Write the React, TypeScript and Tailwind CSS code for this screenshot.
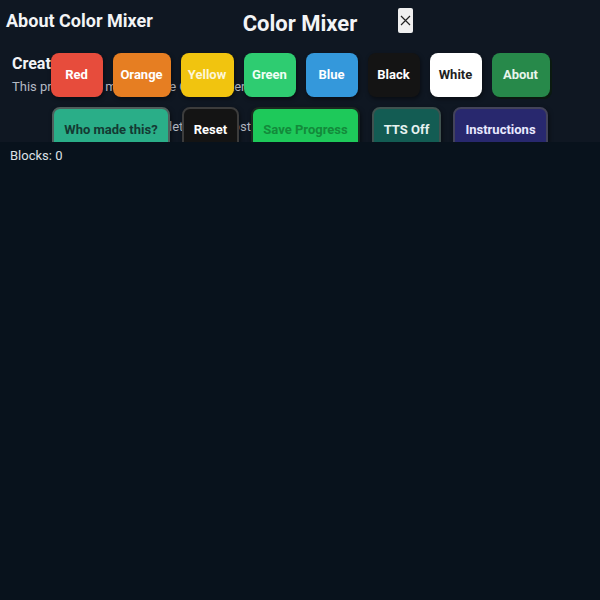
const colorButtons = [
  { label: "Red", cls: "w-[52px] bg-[#e74c3c] text-white" },
  { label: "Orange", cls: "w-[58px] bg-[#e67e22] text-white" },
  { label: "Yellow", cls: "w-[53px] bg-[#f1c40f] text-[#fdf6d8]" },
  { label: "Green", cls: "w-[52px] bg-[#2ecc71] text-[#f0fff5]" },
  { label: "Blue", cls: "w-[52px] bg-[#3498db] text-white" },
  { label: "Black", cls: "w-[52px] bg-[#141414] text-white" },
  { label: "White", cls: "w-[52px] bg-white text-[#1f1f1f]" },
  { label: "About", cls: "w-[58px] bg-[#27894a] text-[#e8f5ec] shadow-[2px_2px_0_#0b1a10]" },
];

const toolButtons = [
  { label: "Who made this?", cls: "w-[118px] bg-[#2aae88] text-[#143a33] border-[#4f5f5c]" },
  { label: "Reset", cls: "w-[57px] bg-[#141414] text-white border-[#3c3c3c]" },
  { label: "Save Progress", cls: "w-[109px] bg-[#1ec95a] text-[#138a3a] border-[#1a2a20]" },
  { label: "TTS Off", cls: "w-[69px] bg-[#135c53] text-[#e6f2f0] border-[#3f524f]" },
  { label: "Instructions", cls: "w-[95px] bg-[#28286e] text-[#e8e8ff] border-[#43435a]" },
];

export default function App() {
  return (
    <div className="min-h-screen bg-[#08121c] font-['Roboto','Liberation_Sans',sans-serif]">
      <header className="relative h-[142px] overflow-hidden bg-[#0f1722]">
        {/* about modal, sits under the toolbar */}
        <div className="absolute inset-0 px-[6px] pt-[9px]">
          <h2 className="text-[18px] leading-[24px] font-bold text-[#f3f4f6]">About Color Mixer</h2>
          <button className="absolute left-[398px] top-[8px] flex h-[25px] w-[15px] items-center justify-center rounded-[2px] bg-[#efefef]">
            <svg width="11" height="11" viewBox="0 0 11 11" stroke="#222" strokeWidth="1.2" fill="none">
              <path d="M1 1L10 10M10 1L1 10" />
            </svg>
          </button>
          <div className="px-[6px]">
            <h3 className="mt-[20px] text-[16px] leading-[22px] font-bold text-[#f3f4f6]">Created By</h3>
            <p className="mt-[3px] text-[13px] leading-[18px] text-[#b4b9c2]">
              This program is made by the Color Mixer Editor.
            </p>
            <p className="mt-[22px] w-[239px] text-right text-[13px] leading-[18px] text-[#b4b9c2]">
              Enjoy the details at most
            </p>
          </div>
        </div>

        <div className="relative flex flex-col items-center pt-[9px]">
          <h1 className="text-[22px] leading-[30px] font-bold text-[#f3f4f6]">Color Mixer</h1>

          <div className="mt-[14px] flex gap-[10px]">
            {colorButtons.map((b) => (
              <button
                key={b.label}
                className={`h-[44px] rounded-[8px] text-[13px] font-bold shadow-[1px_2px_4px_rgba(0,0,0,0.45)] ${b.cls}`}
              >
                {b.label}
              </button>
            ))}
          </div>

          <div className="mt-[10px] flex gap-[12px]">
            {toolButtons.map((b) => (
              <button
                key={b.label}
                className={`h-[46px] rounded-[8px] border-2 text-[13px] font-bold shadow-[1px_2px_4px_rgba(0,0,0,0.5)] ${b.cls}`}
              >
                {b.label}
              </button>
            ))}
          </div>
        </div>
      </header>

      <div className="px-[10px] pt-[6px] text-[13px] leading-[16px] text-[#dde1e6]">Blocks: 0</div>
    </div>
  );
}
